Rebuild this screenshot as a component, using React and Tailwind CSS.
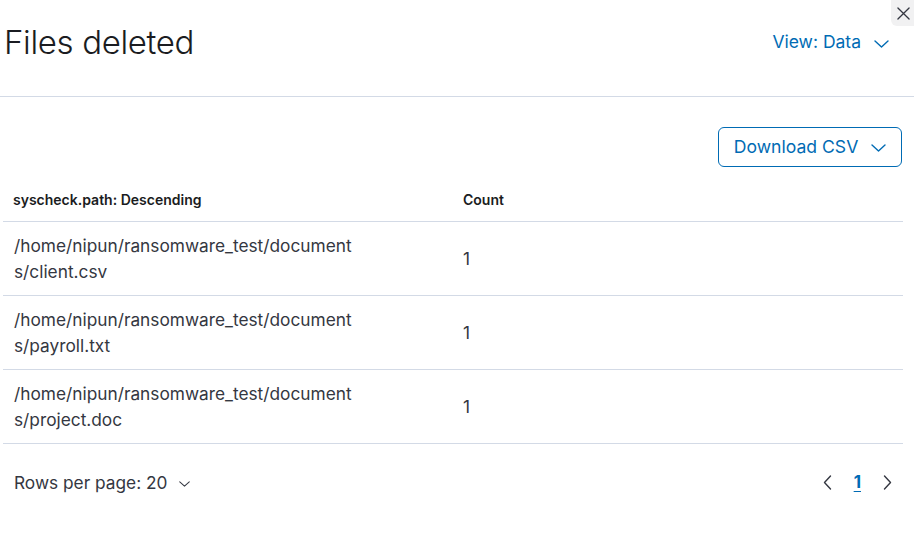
const rows = [
  { path: ['/home/nipun/ransomware_test/document', 's/client.csv'], count: 1 },
  { path: ['/home/nipun/ransomware_test/document', 's/payroll.txt'], count: 1 },
  { path: ['/home/nipun/ransomware_test/document', 's/project.doc'], count: 1 },
];

function Chevron({ dir = 'down', className }) {
  const d = {
    down: 'M1 1 L7.5 7 L14 1',
    left: 'M7 1 L1 7.5 L7 14',
    right: 'M1 1 L7 7.5 L1 14',
  }[dir];
  const vb = dir === 'down' ? '0 0 15 8' : '0 0 8 15';
  return (
    <svg viewBox={vb} className={className} fill="none" stroke="currentColor" strokeWidth="1.4" strokeLinecap="round" strokeLinejoin="round">
      <path d={d} />
    </svg>
  );
}

export default function App() {
  return (
    <div className="relative w-[914px] h-[543px] bg-white overflow-hidden text-[#343741]" style={{ fontFamily: 'Inter, "Noto Sans", sans-serif' }}>
      {/* close */}
      <button className="absolute right-[-8px] top-[-8px] w-[31px] h-[34px] rounded-md bg-[#f1f1f2] flex items-center justify-center pt-[8px] pr-[6px] text-[#343741]">
        <svg viewBox="0 0 14 14" className="w-[13px] h-[13px]" stroke="currentColor" strokeWidth="1.4" strokeLinecap="round">
          <path d="M1 1 L13 13 M13 1 L1 13" />
        </svg>
      </button>

      {/* header */}
      <div className="flex items-center justify-between h-[97px] pl-[4px] pr-[25px] border-b border-[#d3dae6]">
        <h1 className="text-[33px] font-light text-[#1a1c21] tracking-[-0.35px] -mt-[11px]">Files deleted</h1>
        <button className="flex items-center gap-[13px] text-[17.5px] text-[#006bb4] -mt-[11px]">
          View: Data
          <Chevron className="w-[15px] h-[8px] mt-[2px]" />
        </button>
      </div>

      {/* toolbar */}
      <div className="flex justify-end pr-[12px] pt-[30px]">
        <button className="flex items-center justify-center gap-[13px] whitespace-nowrap h-[40px] w-[184px] border border-[#006bb4] rounded-[6px] text-[17.6px] text-[#006bb4]">
          Download CSV
          <Chevron className="w-[15px] h-[8px] mt-[2px]" />
        </button>
      </div>

      {/* table */}
      <div className="ml-[3px] mr-[11px] mt-[10px]">
        <div className="flex items-center h-[45px] border-b border-[#d3dae6] text-[14px] font-semibold text-[#1a1c21]">
          <div className="w-[450px] pl-[10px]">syscheck.path: Descending</div>
          <div className="pl-[10px]">Count</div>
        </div>
        {rows.map((r, i) => (
          <div key={i} className="flex items-center h-[74px] border-b border-[#d3dae6] text-[17.3px] leading-[26px]">
            <div className="w-[450px] pl-[11px] pt-[1px]">
              {r.path.map((l, j) => (
                <div key={j}>{l}</div>
              ))}
            </div>
            <div className="pl-[10px]">{r.count}</div>
          </div>
        ))}
      </div>

      {/* footer */}
      <div className="flex items-center justify-between pl-[14px] pr-[22px] mt-[26px]">
        <button className="flex items-center gap-[12px] text-[17.3px] text-[#343741]">
          Rows per page: 20
          <Chevron className="w-[11px] h-[6px] mt-[2px]" />
        </button>
        <div className="flex items-center gap-[22px]">
          <Chevron dir="left" className="w-[9px] h-[15px] text-[#343741]" />
          <span className="text-[17px] font-bold text-[#006bb4] underline underline-offset-[3px]">1</span>
          <Chevron dir="right" className="w-[9px] h-[15px] text-[#343741]" />
        </div>
      </div>
    </div>
  );
}
